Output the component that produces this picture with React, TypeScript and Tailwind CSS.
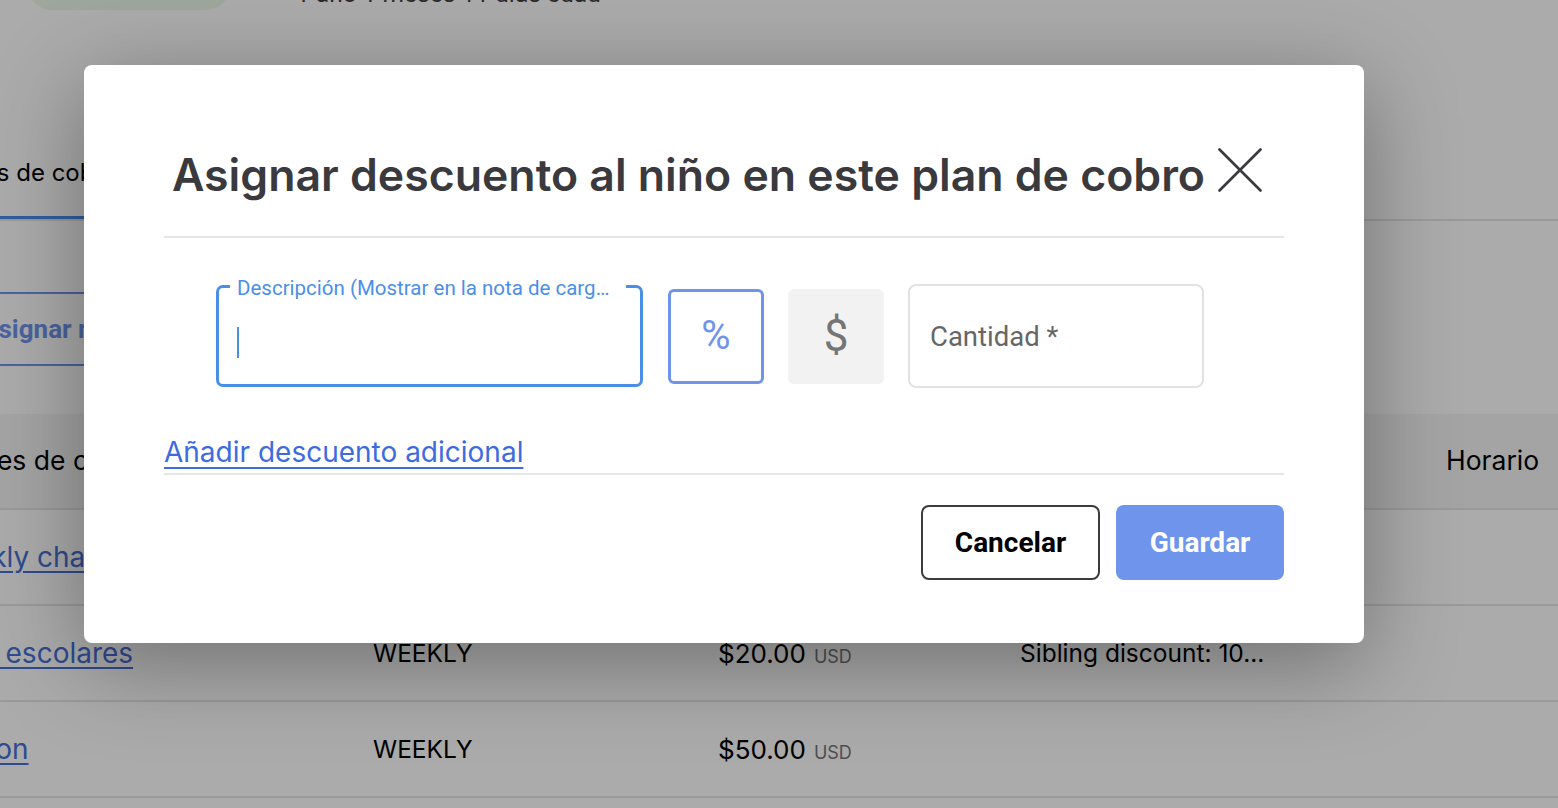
import React from 'react'

type Row = {
    name: string;
    freq?: string;
    amount?: string;
    discount?: string;
};

const rows: Row[] = [
    { name: 'Biweekly charge' },
    { name: 'Útiles escolares', freq: 'WEEKLY', amount: '$20.00', discount: 'Sibling discount: 10...' },
    { name: 'Pension', freq: 'WEEKLY', amount: '$50.00' },
];

function CloseIcon() {
    return (
        <svg width="44" height="44" viewBox="0 0 44 44" fill="none" className="shrink-0 -mt-[10px]">
            <path d="M1.5 1.5L42.5 42.5M42.5 1.5L1.5 42.5" stroke="#3a3a3e" strokeWidth="2.6" strokeLinecap="round" />
        </svg>
    )
}

function BackgroundPage() {
    return (
        <div className="flex flex-col font-['Inter',sans-serif] text-black">
            <div className="h-[130px]">
                <div className="flex items-start -mt-[40px]">
                    <div className="ml-[28px] w-[202px] h-[50px] rounded-b-[24px] bg-[#edf8e8]" />
                    <span className="ml-[66px] mt-[18px] text-[24.5px] leading-[32px] text-[#3f3f3f] font-['Roboto']">
                        1 año 1 meses 11 días edad
                    </span>
                </div>
            </div>

            <div className="h-[91px] flex border-b-2 border-[#e5e5e5]">
                <div className="-ml-[66px] h-full flex items-center pr-8 border-b-[3px] border-[#468cec] text-[24px]">
                    Planes de cobro
                </div>
            </div>

            <div className="mt-[71px] flex">
                <div className="-ml-[40px] h-[74px] flex items-center pl-[24px] pr-6 border-2 border-[#6f94ec] rounded-md text-[26px] font-bold text-[#6f94ec] font-['Roboto']">
                    <span className="-ml-[5px]">Asignar mensualidad</span>
                </div>
            </div>

            <div className="mt-[48px] -ml-[77px] w-[1640px]">
                <div className="grid grid-cols-[450px_345px_302px_426px_1fr] h-[96px] items-center bg-[#f5f5f5] border-b-2 border-[#e5e5e5] text-[26.5px]">
                    <span className="pl-[20px]">Planes de cobro</span>
                    <span>Frecuencia</span>
                    <span>Monto</span>
                    <span>Descuentos</span>
                    <span>Horario</span>
                </div>
                {rows.map((r) => (
                    <div key={r.name} className="grid grid-cols-[450px_345px_302px_426px_1fr] h-[96px] items-center border-b-2 border-[#e5e5e5]">
                        <span className={`text-[28px] text-[#466fd6] underline underline-offset-4 decoration-2 ${r.freq ? '' : '-ml-[12px]'}`}>{r.name}</span>
                        <span className="text-[24.5px]">{r.freq}</span>
                        <span className="text-[26px]">
                            {r.amount}
                            {r.amount && <span className="ml-2 text-[18px] text-[#777]">USD</span>}
                        </span>
                        <span className="text-[24.5px]">{r.discount}</span>
                        <span />
                    </div>
                ))}
            </div>
        </div>
    )
}

function Modal() {
    return (
        <div className="w-[1280px] bg-white rounded-[8px] shadow-[0_20px_90px_rgba(0,0,0,0.35)] pt-[70px] px-[80px] pb-[63px]">
            <div className="h-[103px] pb-[21px] border-b-2 border-[#e6e6e6] flex items-center justify-between pl-2 pr-[22px]">
                <h2 className="font-['Inter',sans-serif] font-semibold text-[44.6px] leading-none text-[#3a3a3e] whitespace-nowrap">
                    Asignar descuento al niño en este plan de cobro
                </h2>
                <CloseIcon />
            </div>

            <div className="mt-[46px] h-[104px] flex items-center pl-[52px] gap-6 font-['Roboto',sans-serif]">
                <div className="relative w-[427px] h-[102px] border-[3px] border-[#4a8fe7] rounded-[7px] flex items-center px-[18px] mr-px">
                    <span className="absolute -top-[13px] left-[11px] bg-white px-[7px] text-[20.5px] leading-[26px] text-[#4a8fe7] w-[396px] truncate">
                        Descripción (Mostrar en la nota de cargo del padre)
                    </span>
                    <span className="w-[2px] h-[31px] bg-[#4a8fe7] mt-[12px]" />
                </div>
                <div className="w-[96px] h-[95px] border-[3px] border-[#6f94ec] rounded-[6px] flex items-center justify-center text-[40px] text-[#6f94ec]">
                    %
                </div>
                <div className="w-[96px] h-[95px] bg-[#f2f2f2] rounded-[6px] flex items-center justify-center text-[44px] text-[#757575]">
                    $
                </div>
                <div className="w-[296px] h-[104px] border-2 border-[#e2e2e2] rounded-[8px] flex items-center px-5 pt-[2px] text-[27.5px] text-[#666]">
                    Cantidad *
                </div>
            </div>

            <div className="mt-[47px] pb-[4px] border-b-2 border-[#e6e6e6]">
                <a href="#" className="font-['Inter',sans-serif] text-[28px] leading-[34px] text-[#3d6be0] underline underline-offset-[5px] decoration-2">
                    Añadir descuento adicional
                </a>
            </div>

            <div className="mt-[30px] flex justify-end gap-4 font-['Roboto',sans-serif] font-bold text-[28px]">
                <button className="w-[179px] h-[75px] border-2 border-[#3c3c40] rounded-[8px] text-black bg-white">
                    Cancelar
                </button>
                <button className="w-[168px] h-[75px] rounded-[8px] bg-[#6f94ec] text-white">
                    Guardar
                </button>
            </div>
        </div>
    )
}

export default function App() {
    return (
        <div className="relative w-[1558px] h-[808px] overflow-hidden bg-white">
            <BackgroundPage />
            <div className="absolute inset-0 bg-black/[0.33]" />
            <div className="absolute inset-0 pt-[65px] pl-[84px]">
                <Modal />
            </div>
        </div>
    )
}
